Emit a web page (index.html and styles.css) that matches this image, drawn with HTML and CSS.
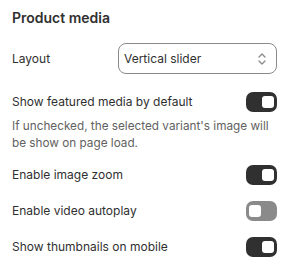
FILE: index.html
```html
<!DOCTYPE html>
<html>
<head>
<meta charset="utf-8">
<link rel="stylesheet" href="styles.css">
</head>
<body>
<div class="panel">
  <h2 class="title">Product media</h2>
  <div class="row select-row">
    <span class="label">Layout</span>
    <div class="select">
      <span>Vertical slider</span>
      <svg class="chev" width="10" height="14" viewBox="0 0 10 14"><path d="M2 5 L5 2 L8 5 M2 9 L5 12 L8 9" fill="none" stroke="#8a8a8a" stroke-width="1.3" stroke-linecap="round" stroke-linejoin="round"/></svg>
    </div>
  </div>
  <div class="row toggle-row first">
    <span class="label">Show featured media by default</span>
    <span class="toggle on"></span>
  </div>
  <p class="help">If unchecked, the selected variant's image will be show on page load.</p>
  <div class="row toggle-row">
    <span class="label">Enable image zoom</span>
    <span class="toggle on"></span>
  </div>
  <div class="row toggle-row">
    <span class="label">Enable video autoplay</span>
    <span class="toggle off"></span>
  </div>
  <div class="row toggle-row">
    <span class="label">Show thumbnails on mobile</span>
    <span class="toggle on"></span>
  </div>
</div>
</body>
</html>
```
FILE: styles.css
```css
html, body {
  margin: 0;
  padding: 0;
  background: #ffffff;
}
body {
  font-family: Inter, "Noto Sans", sans-serif;
  color: #303030;
  font-size: 12px;
}
.panel {
  padding: 8px 10px 0 12px;
}
.title {
  margin: 0;
  font-size: 14px;
  font-weight: 600;
  line-height: 20px;
  color: #303030;
}
.row {
  display: flex;
  align-items: center;
  justify-content: space-between;
}
.select-row {
  margin-top: 15px;
}
.label {
  font-size: 12px;
  line-height: 18px;
}
.select {
  width: 159px;
  height: 31px;
  box-sizing: border-box;
  border: 1px solid #8a8a8a;
  border-radius: 8px;
  display: flex;
  align-items: center;
  justify-content: space-between;
  padding: 0 9px 0 5px;
  font-size: 12px;
}
.chev {
  display: block;
}
.toggle-row {
  height: 20px;
}
.toggle-row.first {
  margin-top: 18px;
}
.toggle-row + .toggle-row {
  margin-top: 16px;
}
.help + .toggle-row {
  margin-top: 13px;
}
.toggle {
  width: 31px;
  height: 20px;
  border-radius: 7px;
  box-sizing: border-box;
  position: relative;
  display: block;
}
.toggle.on { background: #303030; }
.toggle.off { background: #8a8a8a; }
.toggle::after {
  content: "";
  position: absolute;
  top: 4px;
  width: 12px;
  height: 12px;
  border-radius: 3px;
  background: #ffffff;
}
.toggle.on::after { right: 3px; }
.toggle.off::after { left: 3px; }
.help {
  margin: 6px 0 0 0;
  font-size: 11.75px;
  line-height: 17px;
  color: #616161;
}
```
